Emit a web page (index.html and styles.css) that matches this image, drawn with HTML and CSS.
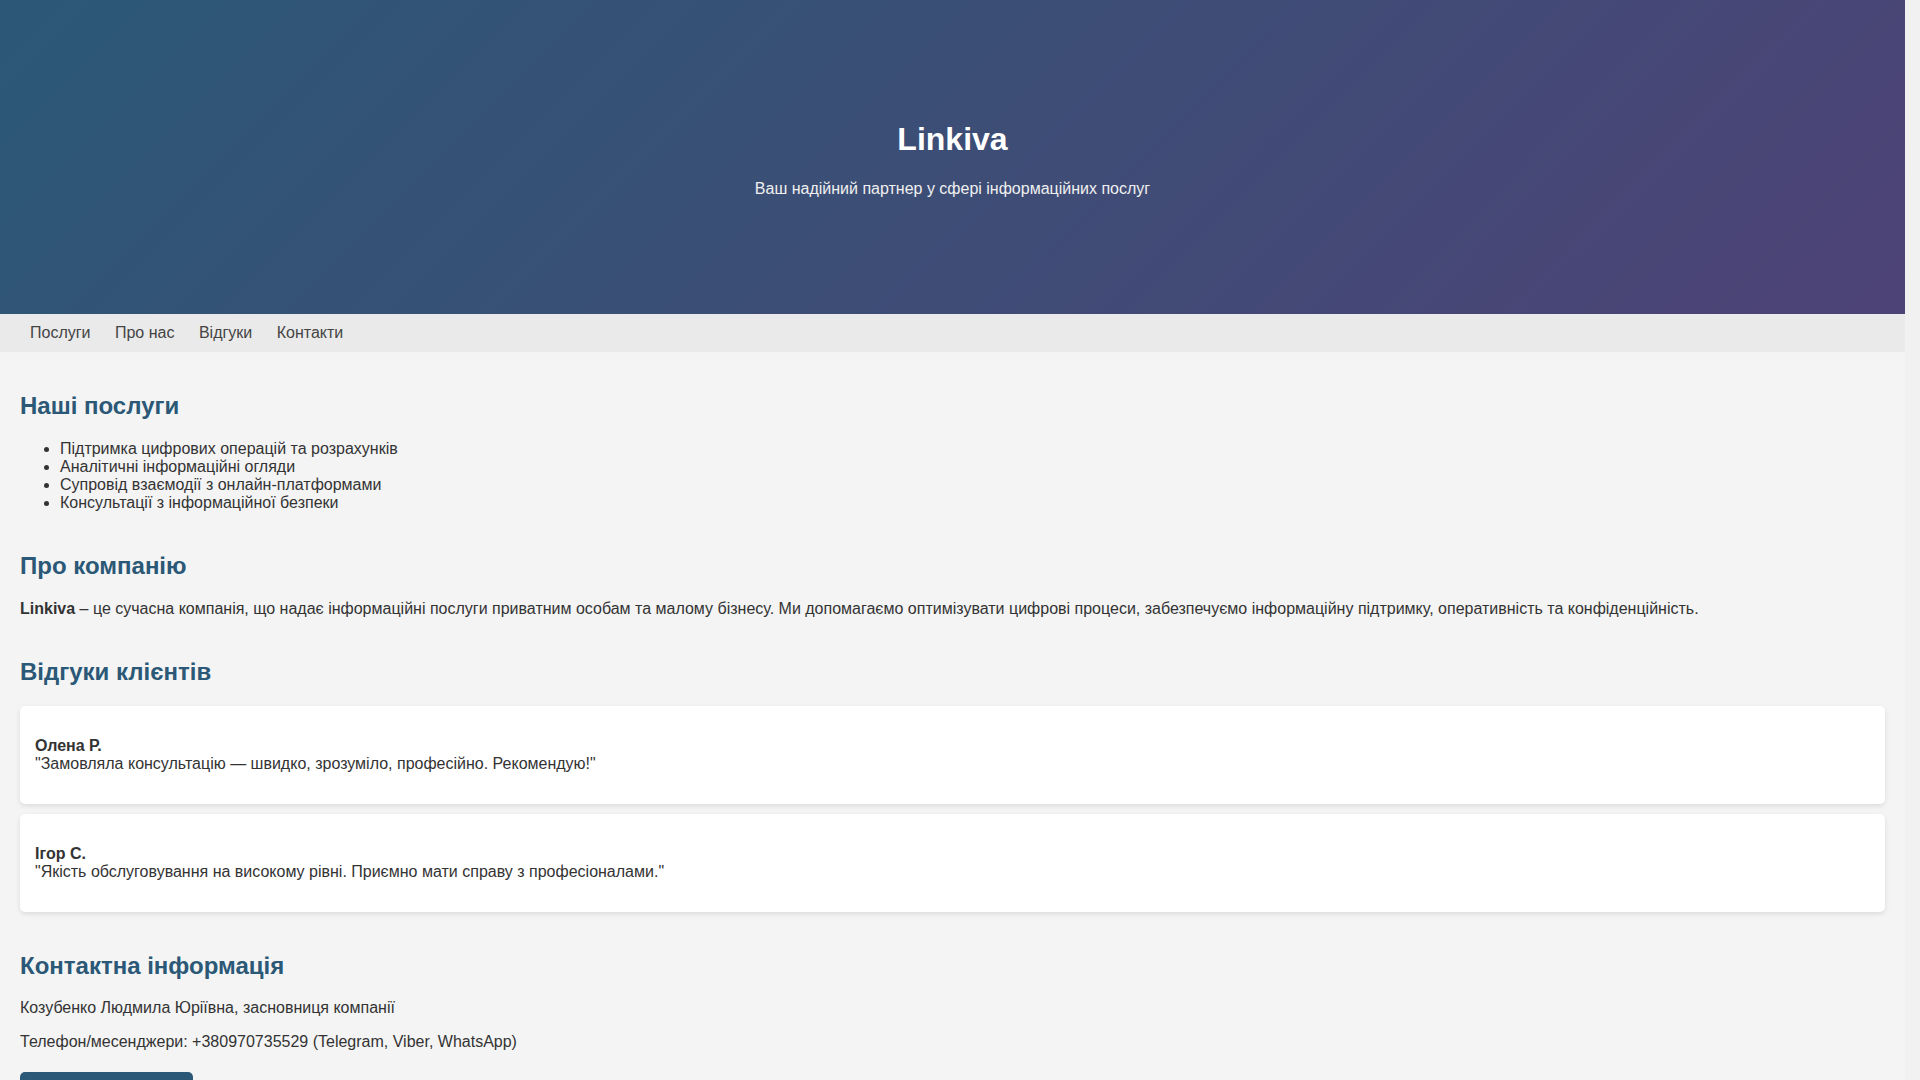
FILE: index.html
```html
<!DOCTYPE html>
<html lang="uk">
<head>
    <meta charset="UTF-8">
    <meta name="viewport" content="width=device-width, initial-scale=1.0">
    <title>Linkiva</title>
    <link rel="stylesheet" href="styles.css">
</head>
<body>

    <header class="hero">
        <h1>Linkiva</h1>
        <p>Ваш надійний партнер у сфері інформаційних послуг</p>
    </header>

    <nav class="menu">
        <a href="#services">Послуги</a>
        <a href="#about">Про нас</a>
        <a href="#reviews">Відгуки</a>
        <a href="#contacts">Контакти</a>
    </nav>

    <main class="content">

        <section id="services" class="section">
            <h2>Наші послуги</h2>
            <ul>
                <li>Підтримка цифрових операцій та розрахунків</li>
                <li>Аналітичні інформаційні огляди</li>
                <li>Супровід взаємодії з онлайн-платформами</li>
                <li>Консультації з інформаційної безпеки</li>
            </ul>
        </section>

        <section id="about" class="section">
            <h2>Про компанію</h2>
            <p><strong>Linkiva</strong> – це сучасна компанія, що надає інформаційні послуги приватним особам та малому бізнесу. Ми допомагаємо оптимізувати цифрові процеси, забезпечуємо інформаційну підтримку, оперативність та конфіденційність.</p>
        </section>

        <section id="reviews" class="section">
            <h2>Відгуки клієнтів</h2>
            <div class="review">
                <p><strong>Олена Р.</strong><br>"Замовляла консультацію — швидко, зрозуміло, професійно. Рекомендую!"</p>
            </div>
            <div class="review">
                <p><strong>Ігор С.</strong><br>"Якість обслуговування на високому рівні. Приємно мати справу з професіоналами."</p>
            </div>
        </section>

        <section id="contacts" class="section">
            <h2>Контактна інформація</h2>
            <p>Козубенко Людмила Юріївна, засновниця компанії</p>
            <p>Телефон/месенджери: +380970735529 (Telegram, Viber, WhatsApp)</p>
            <a class="btn" href="#">Зв’язатися з нами</a>
        </section>

    </main>

</body>
</html>
```

FILE: styles.css
```css
html {
    overflow-y: scroll;
    background-color: #f1f1f1;
}

body {
    margin: 0 15px 0 0; /* место под полосу прокрутки */
    font-family: "Liberation Sans", Arial, sans-serif;
    background-color: #f4f4f4;
    color: #333;
}

.hero {
    background: linear-gradient(135deg, #2b5876, #4e4376);
    color: white;
    text-align: center;
    padding: 100px 20px;
}

.hero p {
    color: #f0f0f0;
}

.menu {
    background-color: #eaeaea;
    padding: 10px 20px;
}

.menu a {
    color: #444;
    text-decoration: none;
    margin: 0 10px;
}

.menu a:hover {
    color: #2b5876;
}

.content {
    padding: 20px;
}

.section {
    margin-bottom: 40px;
}

h2 {
    color: #2b5876;
}

.review {
    background-color: white;
    padding: 15px;
    margin-bottom: 10px;
    border-radius: 5px;
    box-shadow: 0 2px 5px rgba(0, 0, 0, 0.1);
}

.btn {
    display: inline-block;
    margin-top: 5px;
    padding: 10px 20px;
    background-color: #2b5876;
    color: white;
    text-decoration: none;
    border-radius: 5px;
}
```
